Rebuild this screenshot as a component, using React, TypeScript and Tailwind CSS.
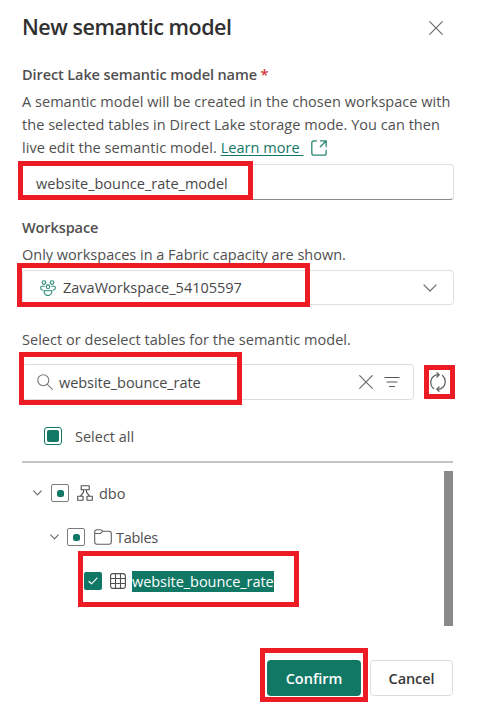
import type { ReactNode } from "react";

function Cross({ className }: { className: string }) {
  return (
    <svg className={className} viewBox="0 0 14 14" fill="none" stroke="#666" strokeWidth="1.1" strokeLinecap="round">
      <path d="M.7.7l12.6 12.6M13.3.7L.7 13.3" />
    </svg>
  );
}

function Chevron({ className }: { className: string }) {
  return (
    <svg className={className} viewBox="0 0 14 8" fill="none" stroke="#777" strokeWidth="1.3" strokeLinecap="round" strokeLinejoin="round">
      <path d="M1 1l6 6 6-6" />
    </svg>
  );
}

function SmallChevron({ className }: { className: string }) {
  return (
    <svg className={className} viewBox="0 0 9 6" fill="none" stroke="#666" strokeWidth="1.1" strokeLinecap="round" strokeLinejoin="round">
      <path d="M.7.9l3.800 3.900L8.300.9" />
    </svg>
  );
}

function ExternalLink() {
  return (
    <svg className="ml-2 h-4 w-4 shrink-0" viewBox="0 0 16 16" fill="none" stroke="#2a8674" strokeWidth="1.3" strokeLinecap="round" strokeLinejoin="round">
      <path d="M5.500.8H3A2.200 2.200 0 0 0 .8 3v10A2.200 2.200 0 0 0 3 15.200h10a2.200 2.200 0 0 0 2.200-2.200v-2.500M9.500.8h5.700v5.700M15 1L9.300 6.700" />
    </svg>
  );
}

function People() {
  return (
    <svg className="h-4 w-4 shrink-0" viewBox="0 0 16 16" fill="none" stroke="#2a8a77" strokeWidth="1.100" strokeLinecap="round">
      <circle cx="3.900" cy="2.600" r="1.800" />
      <circle cx="12.100" cy="2.600" r="1.800" />
      <circle cx="8" cy="6.700" r="1.800" />
      <path d="M4.300 6.300H2.100A1.500 1.500 0 0 0 .6 7.800c0 1.300.8 2.100 2.200 2.400M11.700 6.300h2.200a1.500 1.500 0 0 1 1.500 1.500c0 1.300-.8 2.100-2.200 2.400M4.200 10.700h7.600v.8c0 2.300-1.600 3.900-3.800 3.900s-3.800-1.600-3.800-3.900z" />
    </svg>
  );
}

function Search() {
  return (
    <svg className="h-4 w-4 shrink-0" viewBox="0 0 16 16" fill="none" stroke="#777" strokeWidth="1.1" strokeLinecap="round">
      <circle cx="6.300" cy="6.300" r="5.500" />
      <path d="M10.300 10.300l5 5" />
    </svg>
  );
}

function Filter() {
  return (
    <svg className="h-3 w-4" viewBox="0 0 16 12" fill="none" stroke="#555" strokeWidth="1.200" strokeLinecap="round">
      <path d="M1 1.500h14M3 6h10M5.500 10.500h5" />
    </svg>
  );
}

function Refresh() {
  return (
    <svg className="h-5 w-[18px]" viewBox="0 0 18 20" fill="none" stroke="#666" strokeWidth="1.300" strokeLinecap="round" strokeLinejoin="round">
      <path d="M4.500 16.500A8 8 0 0 1 7.500 2.800H10M8 .8l2.200 2L8 5M13.500 3.500A8 8 0 0 1 10.500 17.200H8M10 15l-2.200 2.200L10 19.300" />
    </svg>
  );
}

function Schema() {
  return (
    <svg className="ml-2 h-4 w-4 shrink-0" viewBox="0 0 16 16" fill="none" stroke="#505050" strokeWidth="1.100" strokeLinejoin="round">
      <path d="M4.200.7h8v4h-8zM.7 11.200h5.300v4H.7zM10 11.200h5.300v4H10zM6.500 4.700v2.500L3.500 11.200M9.500 4.700v2.500l3 4" />
    </svg>
  );
}

function Folder() {
  return (
    <svg className="ml-[9px] h-4 w-[18px] shrink-0" viewBox="0 0 18 16" fill="none" stroke="#606060" strokeWidth="1.100" strokeLinejoin="round">
      <path d="M.7 13V2.700a2 2 0 0 1 2-2h3.500q.8 0 1.300.5l1.200 1h6.400a2.200 2.200 0 0 1 2.200 2.200V13a2.200 2.200 0 0 1-2.200 2.200H2.900A2.200 2.200 0 0 1 .7 13zM.8 4.500h5q.7 0 1.100-.4l1.800-1.900" />
    </svg>
  );
}

function TableGrid() {
  return (
    <svg className="ml-2 h-4 w-4 shrink-0" viewBox="0 0 16 16" fill="none" stroke="#505050" strokeWidth="1.100">
      <rect x=".6" y=".6" width="14.800" height="14.800" rx="2.500" />
      <path d="M5.500.6v14.800M10.500.6v14.800M.6 5.500h14.800M.6 10.500h14.800" />
    </svg>
  );
}

function PartialBox() {
  return (
    <span className="flex h-[18px] w-[18px] shrink-0 items-center justify-center rounded-[2px] border border-[#7c7c7c]">
      <span className="h-[7px] w-[7px] rounded-[2.500px] bg-[#117865]" />
    </span>
  );
}

function CheckedBox() {
  return (
    <span className="flex h-[18px] w-[18px] shrink-0 items-center justify-center rounded-[2px] bg-[#117865]">
      <svg className="h-2 w-[10px]" viewBox="0 0 10 8" fill="none" stroke="#fff" strokeWidth="1.200" strokeLinecap="round" strokeLinejoin="round">
        <path d="M1 4.500l2.500 2.300L9 1.200" />
      </svg>
    </span>
  );
}

function TreeRow({ className, children }: { className: string; children: ReactNode }) {
  return <div className={`flex h-11 items-center ${className}`}>{children}</div>;
}

export default function App() {
  return (
    <div className="relative flex h-[722px] w-[479px] flex-col overflow-hidden bg-white pt-3 pr-[25px] pl-[22px] font-['Open_Sans','Noto_Sans',sans-serif] text-[14.500px] whitespace-nowrap text-[#505050]">
      <header className="flex h-[30px] items-center justify-between">
        <h1 className="text-[21.500px] leading-[30px] font-semibold tracking-[-0.470px] text-[#303030]">New semantic model</h1>
        <Cross className="mt-[2px] mr-[11px] h-[14px] w-[14px]" />
      </header>

      <label className="mt-[23px] block h-5 leading-5 font-semibold tracking-[-0.100px]">
        Direct Lake semantic model name <span className="text-[#d13438]">*</span>
      </label>
      <div className="mt-[5px] leading-[23px] tracking-[0.040px]">
        <div>A semantic model will be created in the chosen workspace with</div>
        <div>the selected tables in Direct Lake storage mode. You can then</div>
        <div className="flex items-center">
          <span>live edit the semantic model.&nbsp;</span>
          <a className="whitespace-pre text-[#117865] underline underline-offset-2">Learn more </a>
          <ExternalLink />
        </div>
      </div>
      <div className="mt-[5px] flex h-9 shrink-0 items-center rounded border border-[#e0e0e0] border-b-[#8a8a8a] pt-[3px] pl-[13px] text-[#484848]">
        website_bounce_rate_model
      </div>

      <label className="mt-[18px] block h-5 leading-5 font-semibold tracking-[-0.100px]">Workspace</label>
      <div className="mt-[7px] h-5 leading-5">Only workspaces in a Fabric capacity are shown.</div>
      <div className="mt-[5px] flex h-[35px] shrink-0 items-center rounded border border-[#e0e0e0] pr-4 pl-[17px] text-[#484848]">
        <People />
        <span className="ml-[7px]">ZavaWorkspace_54105597</span>
        <Chevron className="ml-auto h-2 w-[14px]" />
      </div>

      <div className="mt-[25px] h-5 leading-5 tracking-[0.030px]">Select or deselect tables for the semantic model.</div>
      <div className="mt-[14px] flex h-9 shrink-0 items-center">
        <div className="flex h-9 w-[392px] items-center rounded border border-[#dcdcdc] pr-[13px] pl-[14px] text-[#484848]">
          <Search />
          <span className="mt-[2px] ml-[6px] tracking-[-0.050px]">website_bounce_rate</span>
          <Cross className="ml-auto h-[14px] w-[14px]" />
          <span className="ml-[11px]">
            <Filter />
          </span>
        </div>
        <span className="ml-[15px]">
          <Refresh />
        </span>
      </div>

      <div className="mt-6 flex h-6 shrink-0 items-center pl-[22px]">
        <span className="flex h-[18px] w-[18px] items-center justify-center rounded-[3px] border border-[#117865]">
          <span className="h-3 w-3 rounded-[2px] bg-[#117865]" />
        </span>
        <span className="mt-px ml-[13px]">Select all</span>
      </div>
      <div className="mt-[13px] mr-px h-[2px] shrink-0 bg-[#c2c4c3]" />

      <div className="mt-2 flex h-[155px] shrink-0 justify-between">
        <div>
          <TreeRow className="pl-[11px]">
            <SmallChevron className="mr-[9px] h-[6px] w-[9px]" />
            <PartialBox />
            <Schema />
            <span className="mt-[2px] ml-[6px]">dbo</span>
          </TreeRow>
          <TreeRow className="pl-[28px]">
            <SmallChevron className="mr-[8px] h-[6px] w-[9px]" />
            <PartialBox />
            <Folder />
            <span className="mt-[2px] ml-[4px] tracking-[-0.300px]">Tables</span>
          </TreeRow>
          <TreeRow className="pl-[62px]">
            <CheckedBox />
            <TableGrid />
            <span className="ml-[6px] h-[21px] bg-[#117865] leading-[21px] tracking-[-0.050px] text-white">website_bounce_rate</span>
          </TreeRow>
        </div>
        <div className="mr-px w-[9px] bg-[#8b898b]" />
      </div>

      <footer className="mt-[34px] flex shrink-0 justify-end gap-[9px] pr-px font-semibold">
        <button className="h-9 w-[94px] rounded bg-[#117865] pt-px text-white">Confirm</button>
        <button className="h-9 w-[83px] rounded border border-[#dcdcdc] pt-px tracking-[-0.100px] text-[#383838]">Cancel</button>
      </footer>

      <div className="absolute top-[161px] left-[18px] h-[39px] w-[235px] border-[5px] border-[#ed1c24]" />
      <div className="absolute top-[263px] left-[17px] h-[44px] w-[293px] border-[5px] border-[#ed1c24]" />
      <div className="absolute top-[352px] left-[19px] h-[53px] w-[223px] border-[5px] border-[#ed1c24]" />
      <div className="absolute top-[365px] left-[424px] h-[34px] w-[31px] border-[5px] border-[#ed1c24]" />
      <div className="absolute top-[551px] left-[78px] h-[56px] w-[221px] border-[5px] border-[#ed1c24]" />
      <div className="absolute top-[648px] left-[260px] h-[54px] w-[108px] border-[5px] border-[#ed1c24]" />
    </div>
  );
}
